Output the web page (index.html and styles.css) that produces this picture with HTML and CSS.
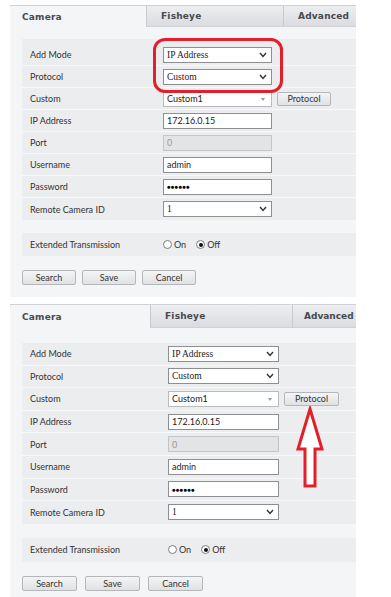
FILE: index.html
```html
<!DOCTYPE html>
<html>
<head>
<meta charset="utf-8">
<link rel="stylesheet" href="styles.css">
</head>
<body>
<div class="page">

  <div class="panel panel-a">
    <div class="tabs">
      <div class="tab tab-cam">Camera</div>
      <div class="tab tab-off tab-fish">Fisheye</div>
      <div class="tab tab-off tab-adv">Advanced</div>
    </div>
    <div class="body">
      <div class="table">
        <div class="row"><div class="lbl">Add Mode</div><div class="val"><div class="field select">IP Address<svg class="chev" viewBox="0 0 8 6"><polyline points="1,1 4,4.5 7,1"/></svg></div></div></div>
        <div class="row"><div class="lbl">Protocol</div><div class="val"><div class="field select">Custom<svg class="chev" viewBox="0 0 8 6"><polyline points="1,1 4,4.5 7,1"/></svg></div></div></div>
        <div class="row"><div class="lbl">Custom</div><div class="val"><div class="field combo">Custom1<span class="tri"></span></div><div class="btn btn-proto">Protocol</div></div></div>
        <div class="row"><div class="lbl">IP Address</div><div class="val"><div class="field">172.16.0.15</div></div></div>
        <div class="row"><div class="lbl">Port</div><div class="val"><div class="field disabled">0</div></div></div>
        <div class="row"><div class="lbl">Username</div><div class="val"><div class="field">admin</div></div></div>
        <div class="row"><div class="lbl">Password</div><div class="val"><div class="field pw">●●●●●●</div></div></div>
        <div class="row"><div class="lbl">Remote Camera ID</div><div class="val"><div class="field select">1<svg class="chev" viewBox="0 0 8 6"><polyline points="1,1 4,4.5 7,1"/></svg></div></div></div>
      </div>
      <div class="table ext">
        <div class="row"><div class="lbl">Extended Transmission</div><div class="val radios"><span class="radio"></span><span class="rtext">On</span><span class="radio on"></span><span class="rtext">Off</span></div></div>
      </div>
      <div class="buttons">
        <div class="btn">Search</div>
        <div class="btn">Save</div>
        <div class="btn">Cancel</div>
      </div>
    </div>
    <div class="highlight"></div>
  </div>

  <div class="panel panel-b">
    <div class="tabs">
      <div class="tab tab-cam">Camera</div>
      <div class="tab tab-off tab-fish">Fisheye</div>
      <div class="tab tab-off tab-adv">Advanced</div>
    </div>
    <div class="body">
      <div class="table">
        <div class="row"><div class="lbl">Add Mode</div><div class="val"><div class="field select">IP Address<svg class="chev" viewBox="0 0 8 6"><polyline points="1,1 4,4.5 7,1"/></svg></div></div></div>
        <div class="row"><div class="lbl">Protocol</div><div class="val"><div class="field select">Custom<svg class="chev" viewBox="0 0 8 6"><polyline points="1,1 4,4.5 7,1"/></svg></div></div></div>
        <div class="row"><div class="lbl">Custom</div><div class="val"><div class="field combo">Custom1<span class="tri"></span></div><div class="btn btn-proto">Protocol</div></div></div>
        <div class="row"><div class="lbl">IP Address</div><div class="val"><div class="field">172.16.0.15</div></div></div>
        <div class="row"><div class="lbl">Port</div><div class="val"><div class="field disabled">0</div></div></div>
        <div class="row"><div class="lbl">Username</div><div class="val"><div class="field">admin</div></div></div>
        <div class="row"><div class="lbl">Password</div><div class="val"><div class="field pw">●●●●●●</div></div></div>
        <div class="row"><div class="lbl">Remote Camera ID</div><div class="val"><div class="field select">1<svg class="chev" viewBox="0 0 8 6"><polyline points="1,1 4,4.5 7,1"/></svg></div></div></div>
      </div>
      <div class="table ext">
        <div class="row"><div class="lbl">Extended Transmission</div><div class="val radios"><span class="radio"></span><span class="rtext">On</span><span class="radio on"></span><span class="rtext">Off</span></div></div>
      </div>
      <div class="buttons">
        <div class="btn">Search</div>
        <div class="btn">Save</div>
        <div class="btn">Cancel</div>
      </div>
    </div>
    <svg class="arrow" viewBox="0 0 28 84"><path d="M14 3 L26 43 L19 43 L19 80 L9 80 L9 43 L2 43 Z"/></svg>
  </div>

</div>
</body>
</html>
```

FILE: styles.css
```css
* { box-sizing: border-box; }

body {
  margin: 0;
  background: #ffffff;
  font-family: Lato, "Liberation Sans", sans-serif;
  font-size: 9px;
  color: #333333;
}

.page {
  display: flex;
  flex-direction: column;
  gap: 7px;
  padding: 5px 0 0 10px;
}

.panel {
  --tab-h: 21px;
  --cam-w: 136px;
  --fish-w: 137px;
  --adv-pl: 14px;
  --body-pt: 12px;
  --table-pt: 5px;
  --row-h: 22px;
  --lbl-w: 138px;
  --inp-w: 109px;
  --ext-mt: 13px;
  --ext-h: 23px;
  --btn-mt: 14px;
  --btn-w: 54px;
  --btn-gap: 6px;
  position: relative;
  width: 346px;
  height: 292px;
  background: #f4f5f7;
  border-top: 1px solid #cfd1d4;
  overflow: hidden;
}

.panel-b {
  --tab-h: 23px;
  --cam-w: 140px;
  --fish-w: 142px;
  --adv-pl: 11px;
  --body-pt: 15px;
  --table-pt: 0px;
  --row-h: 22.6px;
  --lbl-w: 143px;
  --inp-w: 111px;
  --ext-mt: 14px;
  --ext-h: 24px;
  --btn-mt: 14px;
  --btn-w: 55px;
  --btn-gap: 8px;
  height: 293px;
}

/* tabs */
.tabs {
  display: flex;
  height: var(--tab-h);
}

.tab {
  flex: none;
  display: flex;
  align-items: center;
  padding-left: 12px;
  font-family: "DejaVu Sans", sans-serif;
  font-weight: bold;
  font-size: 9px;
  letter-spacing: 0.2px;
  color: #474a4e;
  white-space: nowrap;
}

.tab-cam { width: var(--cam-w); }

.tab-off {
  background: linear-gradient(#eceef0, #dadcdf);
  border-left: 1px solid #c8cacd;
  border-bottom: 1px solid #d0d2d5;
}

.tab-fish { width: var(--fish-w); padding-left: 14px; }
.tab-adv { width: 90px; padding-left: var(--adv-pl); }
.panel-b .tab-adv { letter-spacing: 0; }

/* body */
.body {
  padding: var(--body-pt) 0 0 12px;
}

.table {
  width: 340px;
  background: #ebedef;
  padding-top: var(--table-pt);
}

.row {
  display: grid;
  grid-template-columns: var(--lbl-w) 1fr;
  height: var(--row-h);
  border-bottom: 1px solid #f7f8f9;
}

.row:last-child { border-bottom: none; }

.lbl {
  display: flex;
  align-items: center;
  padding-left: 8px;
  font-size: 9px;
  color: #333;
}

.val {
  display: flex;
  align-items: center;
  gap: 5px;
  padding-left: 3px;
}

.field {
  position: relative;
  width: var(--inp-w);
  height: 16px;
  border: 1px solid #8d8f92;
  background: #ffffff;
  display: flex;
  align-items: center;
  padding-left: 3px;
  font-size: 9px;
  color: #222;
}

.select {
  font-family: "Liberation Serif", serif;
  font-size: 9.5px;
}

.chev {
  position: absolute;
  right: 4px;
  top: 4px;
  width: 8px;
  height: 6px;
  fill: none;
  stroke: #333;
  stroke-width: 1.4;
}

.combo { border-color: #b9bbbe; }

.tri {
  position: absolute;
  right: 6px;
  top: 6px;
  width: 0;
  height: 0;
  border-left: 2.5px solid transparent;
  border-right: 2.5px solid transparent;
  border-top: 3px solid #9a9a9a;
}

.disabled {
  background: #e3e4e5;
  border-color: #c4c6c8;
  color: #999;
}

.pw {
  font-size: 6px;
  letter-spacing: 0.2px;
  color: #000;
}

.radios { gap: 2px; }

.radio {
  width: 9px;
  height: 9px;
  border: 1px solid #7c7e80;
  border-radius: 50%;
  background: #fff;
  display: flex;
  align-items: center;
  justify-content: center;
}

.radio.on::after {
  content: "";
  width: 4px;
  height: 4px;
  border-radius: 50%;
  background: #111;
}

.rtext { margin-right: 8px; color: #333; }

.ext {
  margin-top: var(--ext-mt);
  padding-top: 0;
}

.ext .row { height: var(--ext-h); }

.buttons {
  display: flex;
  gap: var(--btn-gap);
  margin-top: var(--btn-mt);
}

.btn {
  width: var(--btn-w);
  height: 15px;
  display: flex;
  align-items: center;
  justify-content: center;
  border: 1px solid #b4b6b9;
  border-radius: 2px;
  background: linear-gradient(#f4f5f6, #dfe1e3);
  font-size: 9px;
  color: #333;
}

.btn-proto { height: 14px; }

/* overlays */
.highlight {
  position: absolute;
  left: 143px;
  top: 32px;
  width: 130px;
  height: 55px;
  border: 3px solid #e3202a;
  border-radius: 12px;
}

.arrow {
  position: absolute;
  left: 286px;
  top: 101px;
  width: 28px;
  height: 84px;
  fill: #ffffff;
  stroke: #e3202a;
  stroke-width: 3;
  stroke-linejoin: miter;
}
```
